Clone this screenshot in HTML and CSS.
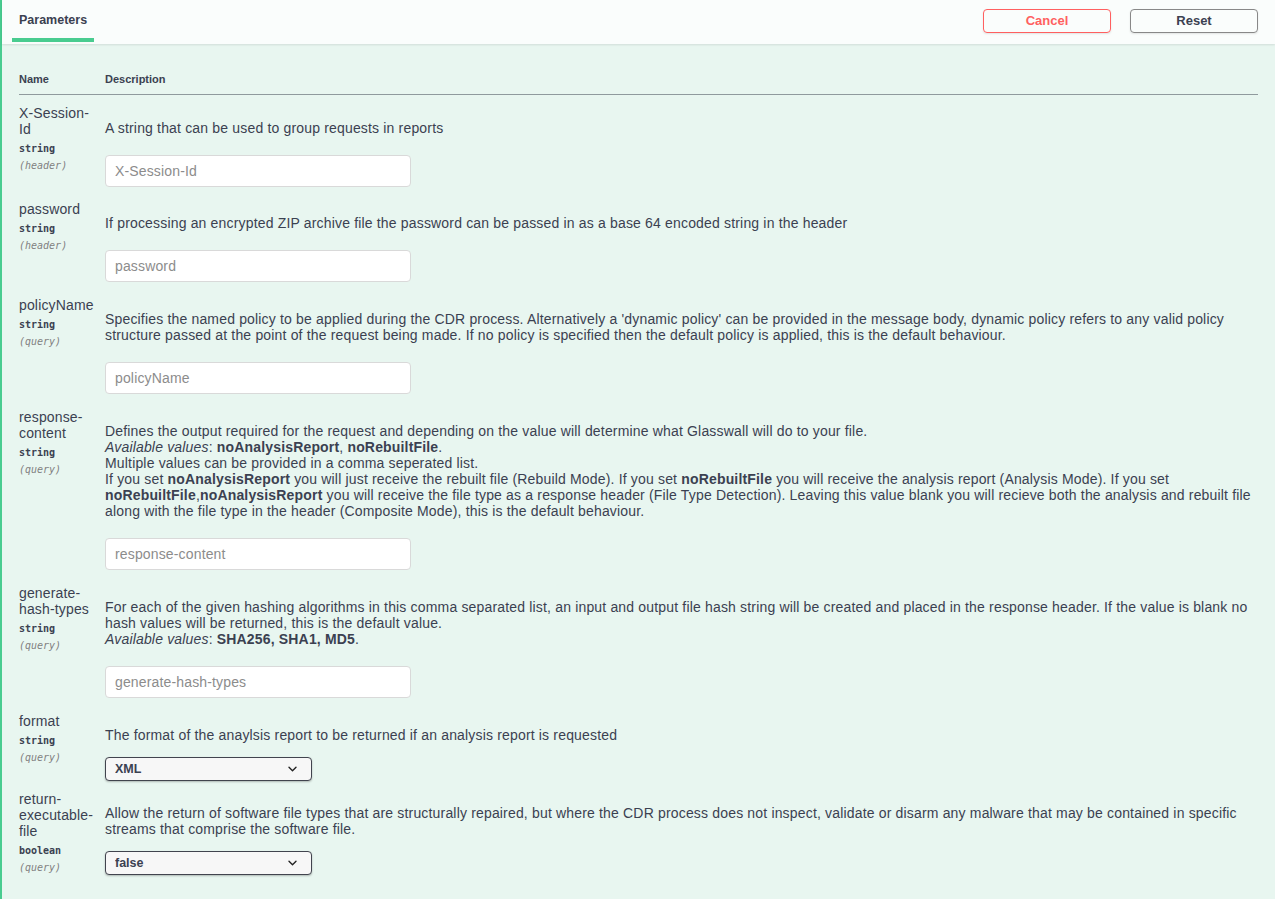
FILE: index.html
```html
<!DOCTYPE html>
<html lang="en">
<head>
<meta charset="utf-8">
<title>Parameters</title>
<link rel="stylesheet" href="styles.css">
</head>
<body>
<div class="opblock">
  <div class="section-header">
    <div class="tab-header"><h4 class="tab">Parameters</h4></div>
    <div class="actions">
      <button class="btn btn-cancel" type="button">Cancel</button>
      <button class="btn btn-reset" type="button">Reset</button>
    </div>
  </div>
  <div class="table-container">
    <table class="parameters">
      <thead>
        <tr><th class="col-name">Name</th><th class="col-desc">Description</th></tr>
      </thead>
      <tbody>
        <tr class="first-row">
          <td class="col-name">
            <div class="param-name">X-Session-Id</div>
            <div class="param-type">string</div>
            <div class="param-in">(header)</div>
          </td>
          <td class="col-desc">
            <p class="markdown">A string that can be used to group requests in reports</p>
            <input class="text-input" type="text" placeholder="X-Session-Id">
          </td>
        </tr>
        <tr>
          <td class="col-name">
            <div class="param-name">password</div>
            <div class="param-type">string</div>
            <div class="param-in">(header)</div>
          </td>
          <td class="col-desc">
            <p class="markdown">If processing an encrypted ZIP archive file the password can be passed in as a base 64 encoded string in the header</p>
            <input class="text-input" type="text" placeholder="password">
          </td>
        </tr>
        <tr>
          <td class="col-name">
            <div class="param-name">policyName</div>
            <div class="param-type">string</div>
            <div class="param-in">(query)</div>
          </td>
          <td class="col-desc">
            <p class="markdown">Specifies the named policy to be applied during the CDR process. Alternatively a 'dynamic policy' can be provided in the message body, dynamic policy refers to any valid policy structure passed at the point of the request being made. If no policy is specified then the default policy is applied, this is the default behaviour.</p>
            <input class="text-input" type="text" placeholder="policyName">
          </td>
        </tr>
        <tr>
          <td class="col-name">
            <div class="param-name">response-content</div>
            <div class="param-type">string</div>
            <div class="param-in">(query)</div>
          </td>
          <td class="col-desc">
            <p class="markdown">Defines the output required for the request and depending on the value will determine what Glasswall will do to your file.<br><em>Available values</em>: <strong>noAnalysisReport</strong>, <strong>noRebuiltFile</strong>.<br>Multiple values can be provided in a comma seperated list.<br>If you set <strong>noAnalysisReport</strong> you will just receive the rebuilt file (Rebuild Mode). If you set <strong>noRebuiltFile</strong> you will receive the analysis report (Analysis Mode). If you set <strong>noRebuiltFile</strong>,<strong>noAnalysisReport</strong> you will receive the file type as a response header (File Type Detection). Leaving this value blank you will recieve both the analysis and rebuilt file along with the file type in the header (Composite Mode), this is the default behaviour.</p>
            <input class="text-input" type="text" placeholder="response-content">
          </td>
        </tr>
        <tr>
          <td class="col-name">
            <div class="param-name">generate-hash-types</div>
            <div class="param-type">string</div>
            <div class="param-in">(query)</div>
          </td>
          <td class="col-desc">
            <p class="markdown">For each of the given hashing algorithms in this comma separated list, an input and output file hash string will be created and placed in the response header. If the value is blank no hash values will be returned, this is the default value.<br><em>Available values</em>: <strong>SHA256, SHA1, MD5</strong>.</p>
            <input class="text-input" type="text" placeholder="generate-hash-types">
          </td>
        </tr>
        <tr>
          <td class="col-name">
            <div class="param-name">format</div>
            <div class="param-type">string</div>
            <div class="param-in">(query)</div>
          </td>
          <td class="col-desc">
            <p class="markdown">The format of the anaylsis report to be returned if an analysis report is requested</p>
            <div class="select-wrap">
              <select class="select"><option>XML</option><option>JSON</option></select>
              <svg class="chevron" width="9" height="6" viewBox="0 0 9 6" aria-hidden="true"><path d="M1 1.2l3.5 3.5 3.5-3.5" fill="none" stroke="#222" stroke-width="1.4" stroke-linecap="round" stroke-linejoin="round"/></svg>
            </div>
          </td>
        </tr>
        <tr>
          <td class="col-name">
            <div class="param-name">return-executable-file</div>
            <div class="param-type">boolean</div>
            <div class="param-in">(query)</div>
          </td>
          <td class="col-desc">
            <p class="markdown">Allow the return of software file types that are structurally repaired, but where the CDR process does not inspect, validate or disarm any malware that may be contained in specific streams that comprise the software file.</p>
            <div class="select-wrap">
              <select class="select"><option>false</option><option>true</option></select>
              <svg class="chevron" width="9" height="6" viewBox="0 0 9 6" aria-hidden="true"><path d="M1 1.2l3.5 3.5 3.5-3.5" fill="none" stroke="#222" stroke-width="1.4" stroke-linecap="round" stroke-linejoin="round"/></svg>
            </div>
          </td>
        </tr>
      </tbody>
    </table>
  </div>
</div>
</body>
</html>
```

FILE: styles.css
```css
html, body {
  margin: 0;
  padding: 0;
}

body {
  background: #ffffff;
  font-family: "Liberation Sans", Arial, sans-serif;
  color: #3b4151;
}

.opblock {
  min-height: 100vh;
  box-sizing: border-box;
  border-left: 2px solid #49cc90;
  background: #e8f6f0;
  padding-bottom: 20px;
}

.section-header {
  display: flex;
  justify-content: space-between;
  align-items: flex-start;
  height: 44px;
  box-sizing: border-box;
  padding: 0 17px 0 17px;
  background: #fafdfc;
  box-shadow: 0 1px 2px rgba(0, 0, 0, 0.1);
}

.tab-header {
  height: 44px;
}

.tab {
  position: relative;
  margin: 0;
  padding-top: 12px;
  font-size: 12.5px;
  line-height: 17px;
  font-weight: 700;
  color: #3b4151;
}

.tab::after {
  content: "";
  position: absolute;
  left: -7px;
  right: -7px;
  top: 38px;
  height: 4px;
  background: #49cc90;
}

.actions {
  display: flex;
  gap: 19px;
  padding-top: 9px;
}

.btn {
  width: 128px;
  height: 24px;
  box-sizing: border-box;
  border-radius: 4px;
  background: transparent;
  font-family: "Liberation Sans", Arial, sans-serif;
  font-size: 13px;
  line-height: 20px;
  font-weight: 700;
  padding: 0;
  box-shadow: 0 1px 2px rgba(0, 0, 0, 0.1);
}

.btn-cancel {
  border: 1px solid #ff6060;
  color: #ff6060;
}

.btn-reset {
  border: 1px solid #888888;
  color: #3b4151;
}

.table-container {
  padding: 28px 17px 0 17px;
}

.parameters {
  width: 100%;
  border-collapse: collapse;
}

.parameters th {
  text-align: left;
  font-size: 11px;
  line-height: 15px;
  font-weight: 700;
  padding: 0 0 7px 0;
  border-bottom: 1px solid rgba(59, 65, 81, 0.3);
}

.parameters td {
  vertical-align: top;
  padding: 10px 0 0 0;
}

.first-row .col-desc {
  padding-top: 11px;
}

.first-row .text-input {
  margin-bottom: 4px;
}

.col-name {
  width: 86px;
  box-sizing: border-box;
  padding-right: 8px !important;
}

.param-name {
  font-size: 14px;
  line-height: 16px;
  letter-spacing: 0.15px;
  width: 78px;
}

.param-type {
  font-family: "DejaVu Sans Mono", "Liberation Mono", monospace;
  font-size: 10px;
  line-height: 13px;
  font-weight: 700;
  padding: 5px 0;
  color: #3b4151;
}

.param-in {
  font-family: "DejaVu Sans Mono", "Liberation Mono", monospace;
  font-size: 10px;
  line-height: 11px;
  font-style: italic;
  color: #808080;
}

.markdown {
  margin: 14px 0;
  font-size: 14px;
  line-height: 16px;
  letter-spacing: 0.17px;
}

.markdown strong {
  font-weight: 700;
}

.text-input {
  display: block;
  width: 306px;
  height: 32px;
  box-sizing: border-box;
  margin: 19px 0 5px 0;
  padding: 0 9px;
  border: 1px solid #d9d9d9;
  border-radius: 4px;
  background: #ffffff;
  font-family: "Liberation Sans", Arial, sans-serif;
  font-size: 14px;
  letter-spacing: 0.15px;
  color: #3b4151;
}

.text-input::placeholder {
  color: #8c8c8c;
}

.select-wrap {
  position: relative;
  width: 207px;
  margin: 14px 0 0 0;
}

.select {
  display: block;
  width: 207px;
  height: 24px;
  box-sizing: border-box;
  -webkit-appearance: none;
  appearance: none;
  border: 1px solid #41444e;
  border-radius: 4px;
  background: #f7f7f7;
  box-shadow: 0 1px 2px rgba(0, 0, 0, 0.25);
  padding: 0 30px 0 9px;
  font-family: "Liberation Sans", Arial, sans-serif;
  font-size: 12.5px;
  font-weight: 700;
  color: #3b4151;
}

.chevron {
  position: absolute;
  left: 183px;
  top: 9px;
  pointer-events: none;
}
```
